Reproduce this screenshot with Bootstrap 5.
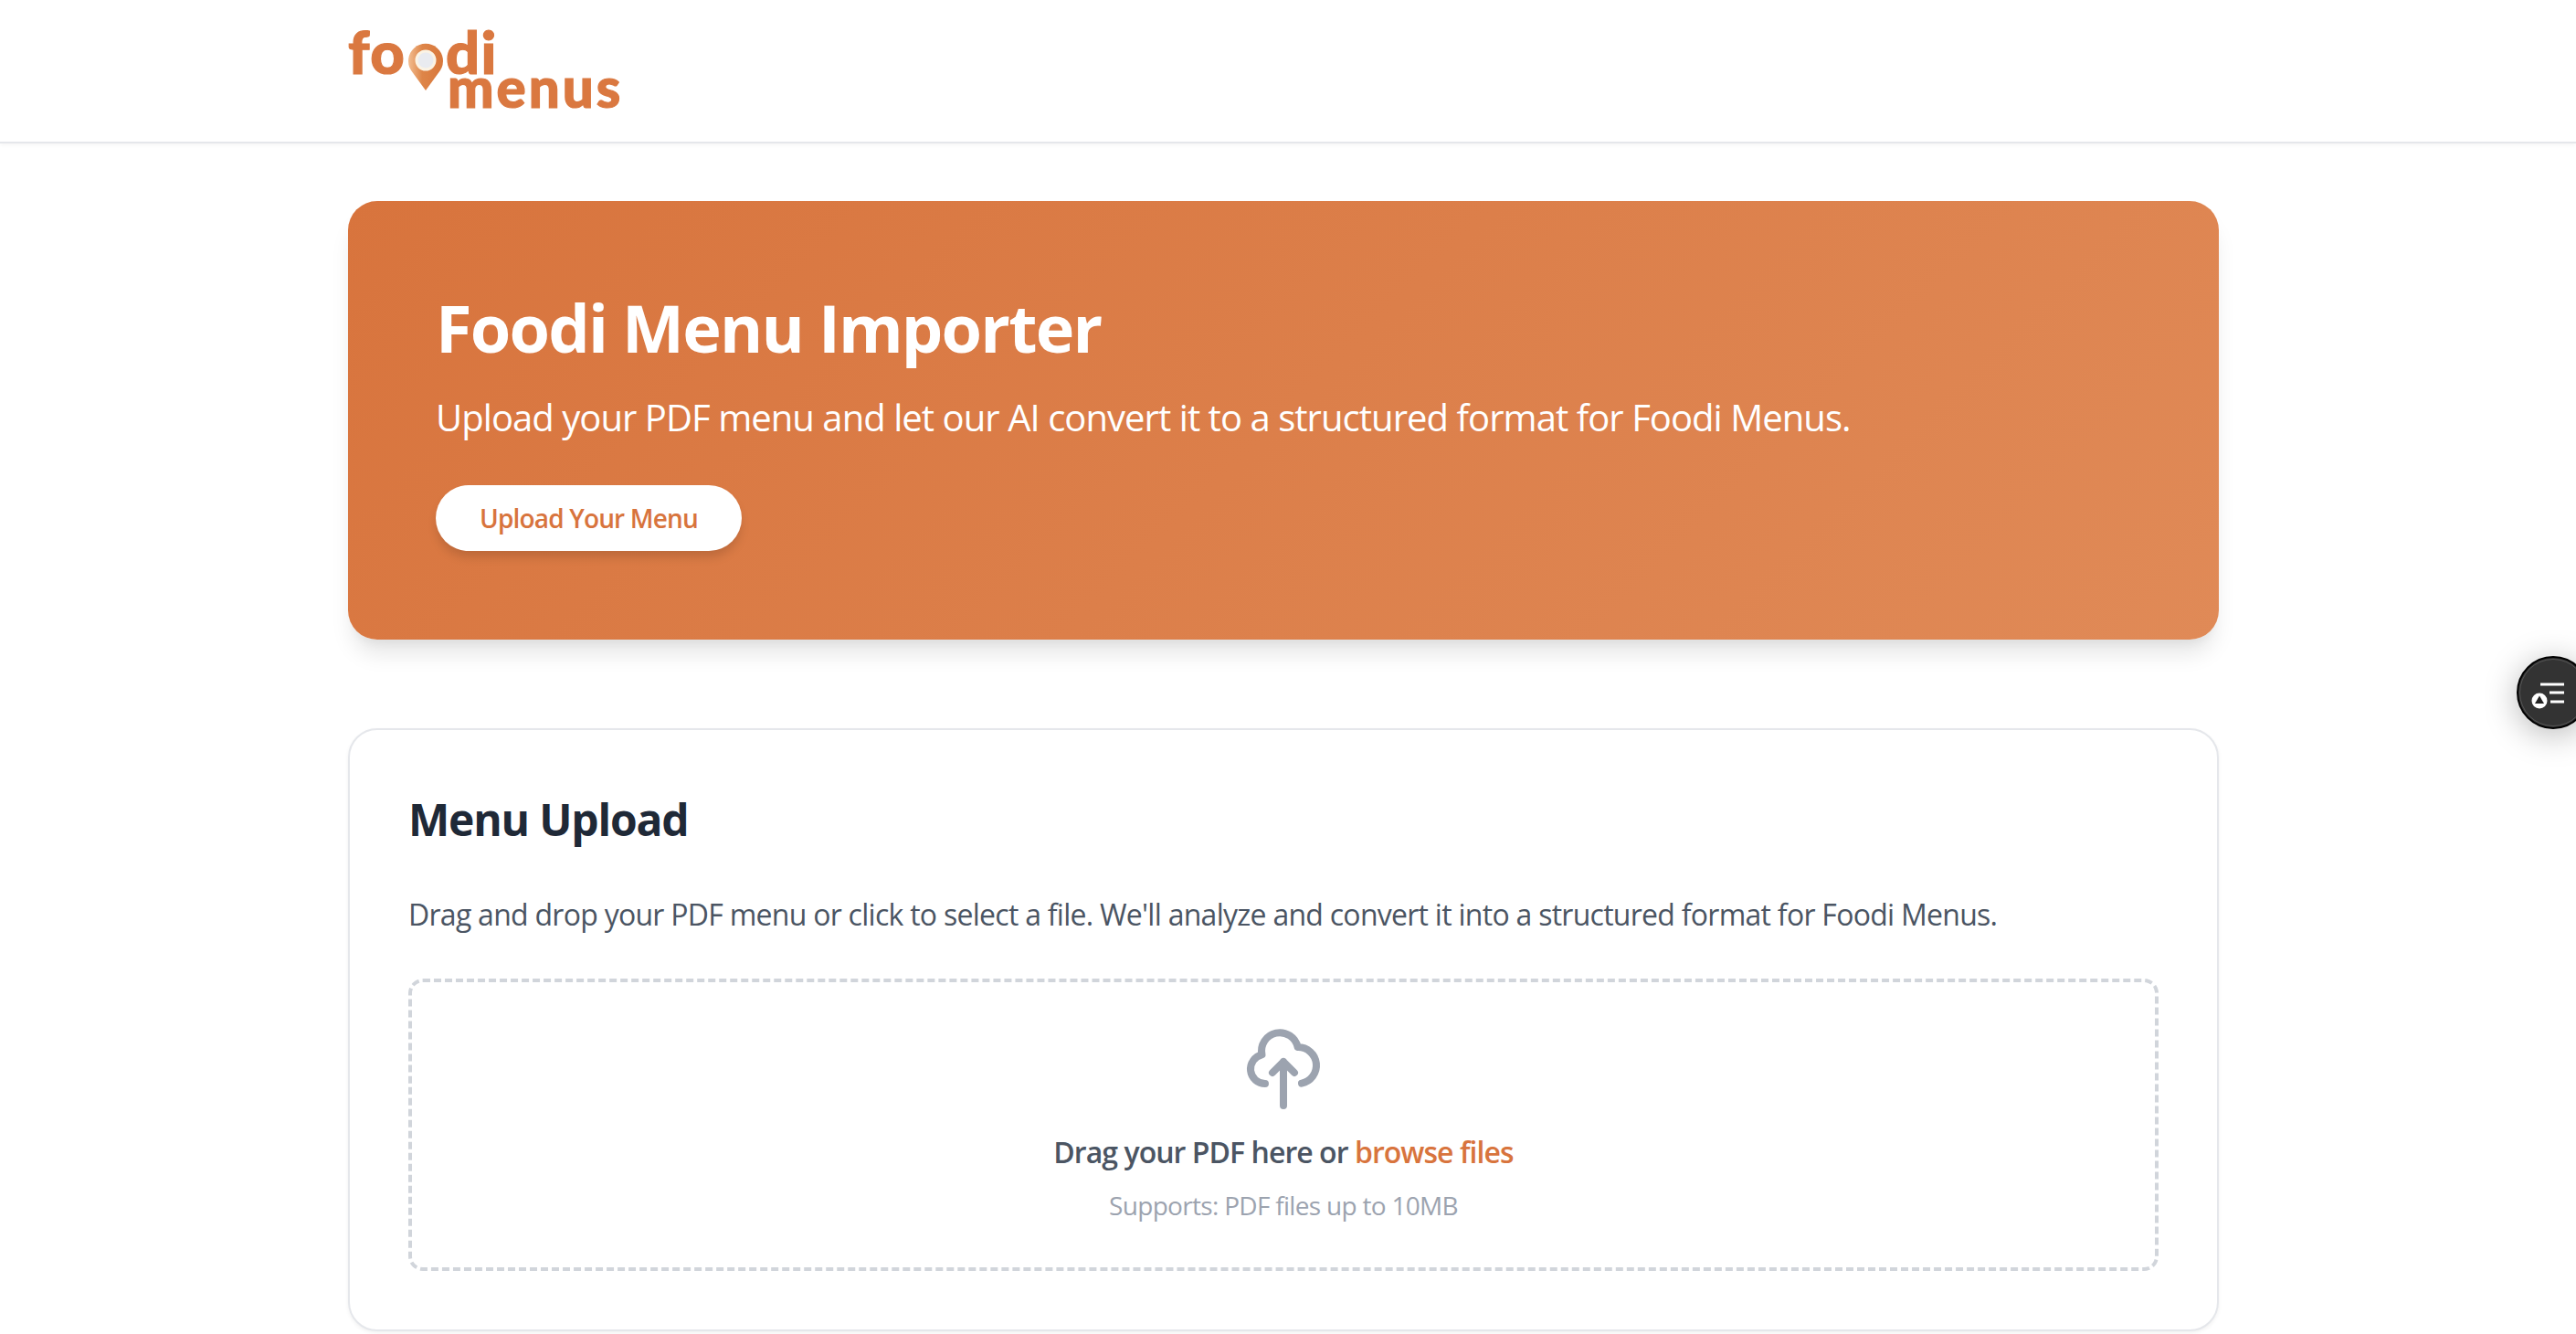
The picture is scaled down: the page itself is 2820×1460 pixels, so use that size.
<!DOCTYPE html>
<html lang="en">
  <head>
    <meta charset="UTF-8" />
    <meta name="viewport" content="width=device-width, initial-scale=1.0" />
    <title>Foodi Menu Importer</title>

    <link
      href="https://cdn.jsdelivr.net/npm/bootstrap@5.3.0/dist/css/bootstrap.min.css"
      rel="stylesheet"
    />

    <style>
      html,
      body {
        height: 100%;
        overflow: hidden;
      }
      body {
        background: #fff;
        font-family: "Open Sans", "Noto Sans", sans-serif;
      }
      .top-bar {
        height: 157px;
        padding: 0;
        background: #fff;
        border-bottom: 2px solid #e5e7eb;
        box-shadow: 0 2px 4px rgba(0, 0, 0, 0.04);
      }
      .page-wrap {
        width: 2048px;
        margin-left: 381px;
      }
      .logo-svg {
        display: block;
        margin-left: -6px;
      }
      .logo-svg text {
        font-family: Lato, sans-serif;
        font-weight: 900;
        font-size: 60px;
        letter-spacing: 3px;
        fill: #da7840;
        stroke: #da7840;
        stroke-width: 1.2px;
      }
      .logo-svg .logo-upper {
        font-size: 65px;
        letter-spacing: 1.5px;
      }
      .hero-box {
        height: 480px;
        margin-top: 63px;
        margin-bottom: 97px;
        padding: 96px;
        color: #fff;
        border-radius: 32px;
        background: linear-gradient(135deg, #d8743d, #e08a57);
        box-shadow: 0 20px 25px -5px rgba(0, 0, 0, 0.1),
          0 10px 10px -5px rgba(0, 0, 0, 0.04);
      }
      .hero-title {
        font-size: 72px;
        font-weight: 700;
        line-height: 84px;
        letter-spacing: -1.8px;
        margin-bottom: 29px;
      }
      .hero-sub {
        font-size: 40px;
        line-height: 56px;
        letter-spacing: -0.95px;
        margin-bottom: 46px;
      }
      .hero-btn {
        height: 72px;
        width: 335px;
        padding: 0;
        font-size: 28px;
        font-weight: 600;
        letter-spacing: -0.85px;
        color: #d8743d;
        background: #fff;
        border: 0;
        border-radius: 36px;
        box-shadow: 0 8px 12px -2px rgba(0, 0, 0, 0.15);
      }
      .upload-card {
        height: 660px;
        padding: 64px;
        border: 2px solid #e5e7eb;
        border-radius: 32px;
        box-shadow: 0 2px 4px rgba(0, 0, 0, 0.06);
      }
      .upload-title {
        font-size: 48px;
        font-weight: 700;
        line-height: 68px;
        letter-spacing: -1.2px;
        color: #1f2937;
        margin-bottom: 46px;
      }
      .upload-text {
        font-size: 32px;
        line-height: 48px;
        letter-spacing: -0.73px;
        color: #4b5563;
        margin-bottom: 46px;
      }
      .drop-zone {
        height: 320px;
        padding-top: 47px;
        border: 4px dashed #d1d5db;
        border-radius: 16px;
      }
      .drop-icon {
        display: block;
        margin: 0 auto 19px;
      }
      .drop-main {
        font-size: 32px;
        font-weight: 600;
        line-height: 48px;
        letter-spacing: -0.95px;
        color: #4b5563;
        margin-bottom: 14px;
      }
      .drop-main a {
        color: #d8743d;
        text-decoration: none;
      }
      .drop-note {
        font-size: 28px;
        line-height: 40px;
        letter-spacing: -0.7px;
        color: #9ca3af;
      }
      .side-widget {
        right: -15px;
        top: 718px;
        width: 80px;
        height: 80px;
        background: #333;
        border: 2px solid #000;
        outline: 1px solid #555;
        outline-offset: -4px;
        box-shadow: 0 6px 36px rgba(0, 0, 0, 0.28);
      }
    </style>
  </head>

  <body>
    <nav class="navbar top-bar">
      <div class="page-wrap">
        <svg class="logo-svg" width="320" height="154" viewBox="0 0 320 154">
          <defs>
            <linearGradient id="pinFill" x1="0" x2="1" y1="0" y2="0">
              <stop offset="0" stop-color="#f2bd90" />
              <stop offset="0.4" stop-color="#de8548" />
              <stop offset="1" stop-color="#d8773c" />
            </linearGradient>
          </defs>
          <text class="logo-upper" x="6" y="80">fo</text>
          <text class="logo-upper" x="113" y="80">di</text>
          <text x="115" y="117">menus</text>
          <path d="M91 98 L75 76 A19 19 0 1 1 107 76 Z" fill="url(#pinFill)" />
          <circle cx="91" cy="65" r="10" fill="#e9ebf0" stroke="#fbf3e4" stroke-width="3" />
        </svg>
      </div>
    </nav>

    <div class="page-wrap">
      <section class="hero-box">
        <h1 class="hero-title">Foodi Menu Importer</h1>
        <p class="hero-sub">
          Upload your PDF menu and let our AI convert it to a structured format
          for Foodi Menus.
        </p>
        <button class="btn hero-btn">Upload Your Menu</button>
      </section>

      <section class="card upload-card">
        <h2 class="upload-title">Menu Upload</h2>
        <p class="upload-text">
          Drag and drop your PDF menu or click to select a file. We'll analyze
          and convert it into a structured format for Foodi Menus.
        </p>
        <div class="drop-zone text-center">
          <svg class="drop-icon" width="96" height="96" viewBox="0 0 24 24" fill="none" stroke="#9ca3af" stroke-width="2" stroke-linecap="round" stroke-linejoin="round">
            <path d="M7 16a4 4 0 01-.88-7.903A5 5 0 1115.9 6L16 6a5 5 0 011 9.9M15 13l-3-3m0 0l-3 3m3-3v12" />
          </svg>
          <p class="drop-main">Drag your PDF here or <a href="#">browse files</a></p>
          <p class="drop-note mb-0">Supports: PDF files up to 10MB</p>
        </div>
      </section>
    </div>

    <div class="side-widget position-fixed rounded-circle">
      <svg width="76" height="76" viewBox="0 0 76 76">
        <path d="M24 29h26M34 38h16M35 48h15" stroke="#fff" stroke-width="3" />
        <circle cx="23" cy="47" r="8.5" fill="#fff" />
        <path d="M23 41.5l5 8.5h-10z" fill="#222" />
      </svg>
    </div>

    <script src="https://cdn.jsdelivr.net/npm/bootstrap@5.3.0/dist/js/bootstrap.bundle.min.js"></script>
  </body>
</html>
